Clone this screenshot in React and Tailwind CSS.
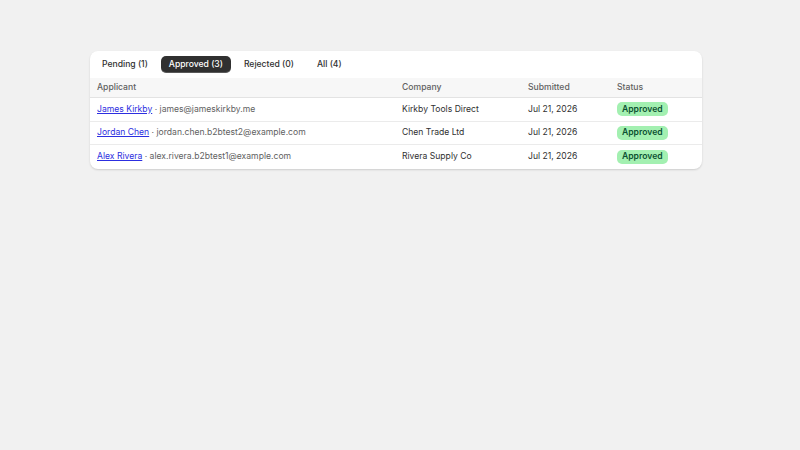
const rows = [
  { name: 'James Kirkby', email: 'james@jameskirkby.me', company: 'Kirkby Tools Direct' },
  { name: 'Jordan Chen', email: 'jordan.chen.b2btest2@example.com', company: 'Chen Trade Ltd' },
  { name: 'Alex Rivera', email: 'alex.rivera.b2btest1@example.com', company: 'Rivera Supply Co' },
];

const tabs = ['Pending (1)', 'Approved (3)', 'Rejected (0)', 'All (4)'];

export default function App() {
  return (
    <div className="min-h-[450px] bg-[#f1f1f1] pt-[51px] px-[90px] font-[Inter,sans-serif] text-[8.6px]">
      <div className="w-[612px] bg-white rounded-[8px] shadow-[0_1px_2px_rgba(0,0,0,0.15)] overflow-hidden">
        <div className="flex items-center gap-[3px] pl-[2px] h-[27px]">
          {tabs.map((t, i) => (
            <div
              key={t}
              className={
                i === 1
                  ? 'h-[17px] px-[8px] flex items-center rounded-[5px] bg-[#303030] text-white font-medium shadow-[inset_0_-1px_0_rgba(255,255,255,0.2)]'
                  : 'h-[17px] px-[10px] flex items-center text-[#303030] font-medium'
              }
            >
              {t}
            </div>
          ))}
        </div>
        <div className="flex items-center h-[20px] bg-[#f7f7f7] border-b border-[#e3e3e3] text-[#616161] font-medium">
          <div className="w-[312px] pl-[7px]">Applicant</div>
          <div className="w-[126px]">Company</div>
          <div className="w-[89px]">Submitted</div>
          <div>Status</div>
        </div>
        {rows.map((r, i) => (
          <div key={r.name} className={`flex items-center h-[23.5px] text-[#303030] ${i < 2 ? 'border-b border-[#ebebeb]' : ''}`}>
            <div className="w-[312px] pl-[7px] whitespace-nowrap">
              <span className="text-[#2c2ee0] underline">{r.name}</span>
              <span className="text-[#616161]"> · {r.email}</span>
            </div>
            <div className="w-[126px]">{r.company}</div>
            <div className="w-[89px]">Jul 21, 2026</div>
            <div>
              <span className="inline-flex items-center h-[14px] px-[5px] rounded-[5px] bg-[#a3f0b1] text-[#0c5132] font-semibold">Approved</span>
            </div>
          </div>
        ))}
      </div>
    </div>
  );
}
